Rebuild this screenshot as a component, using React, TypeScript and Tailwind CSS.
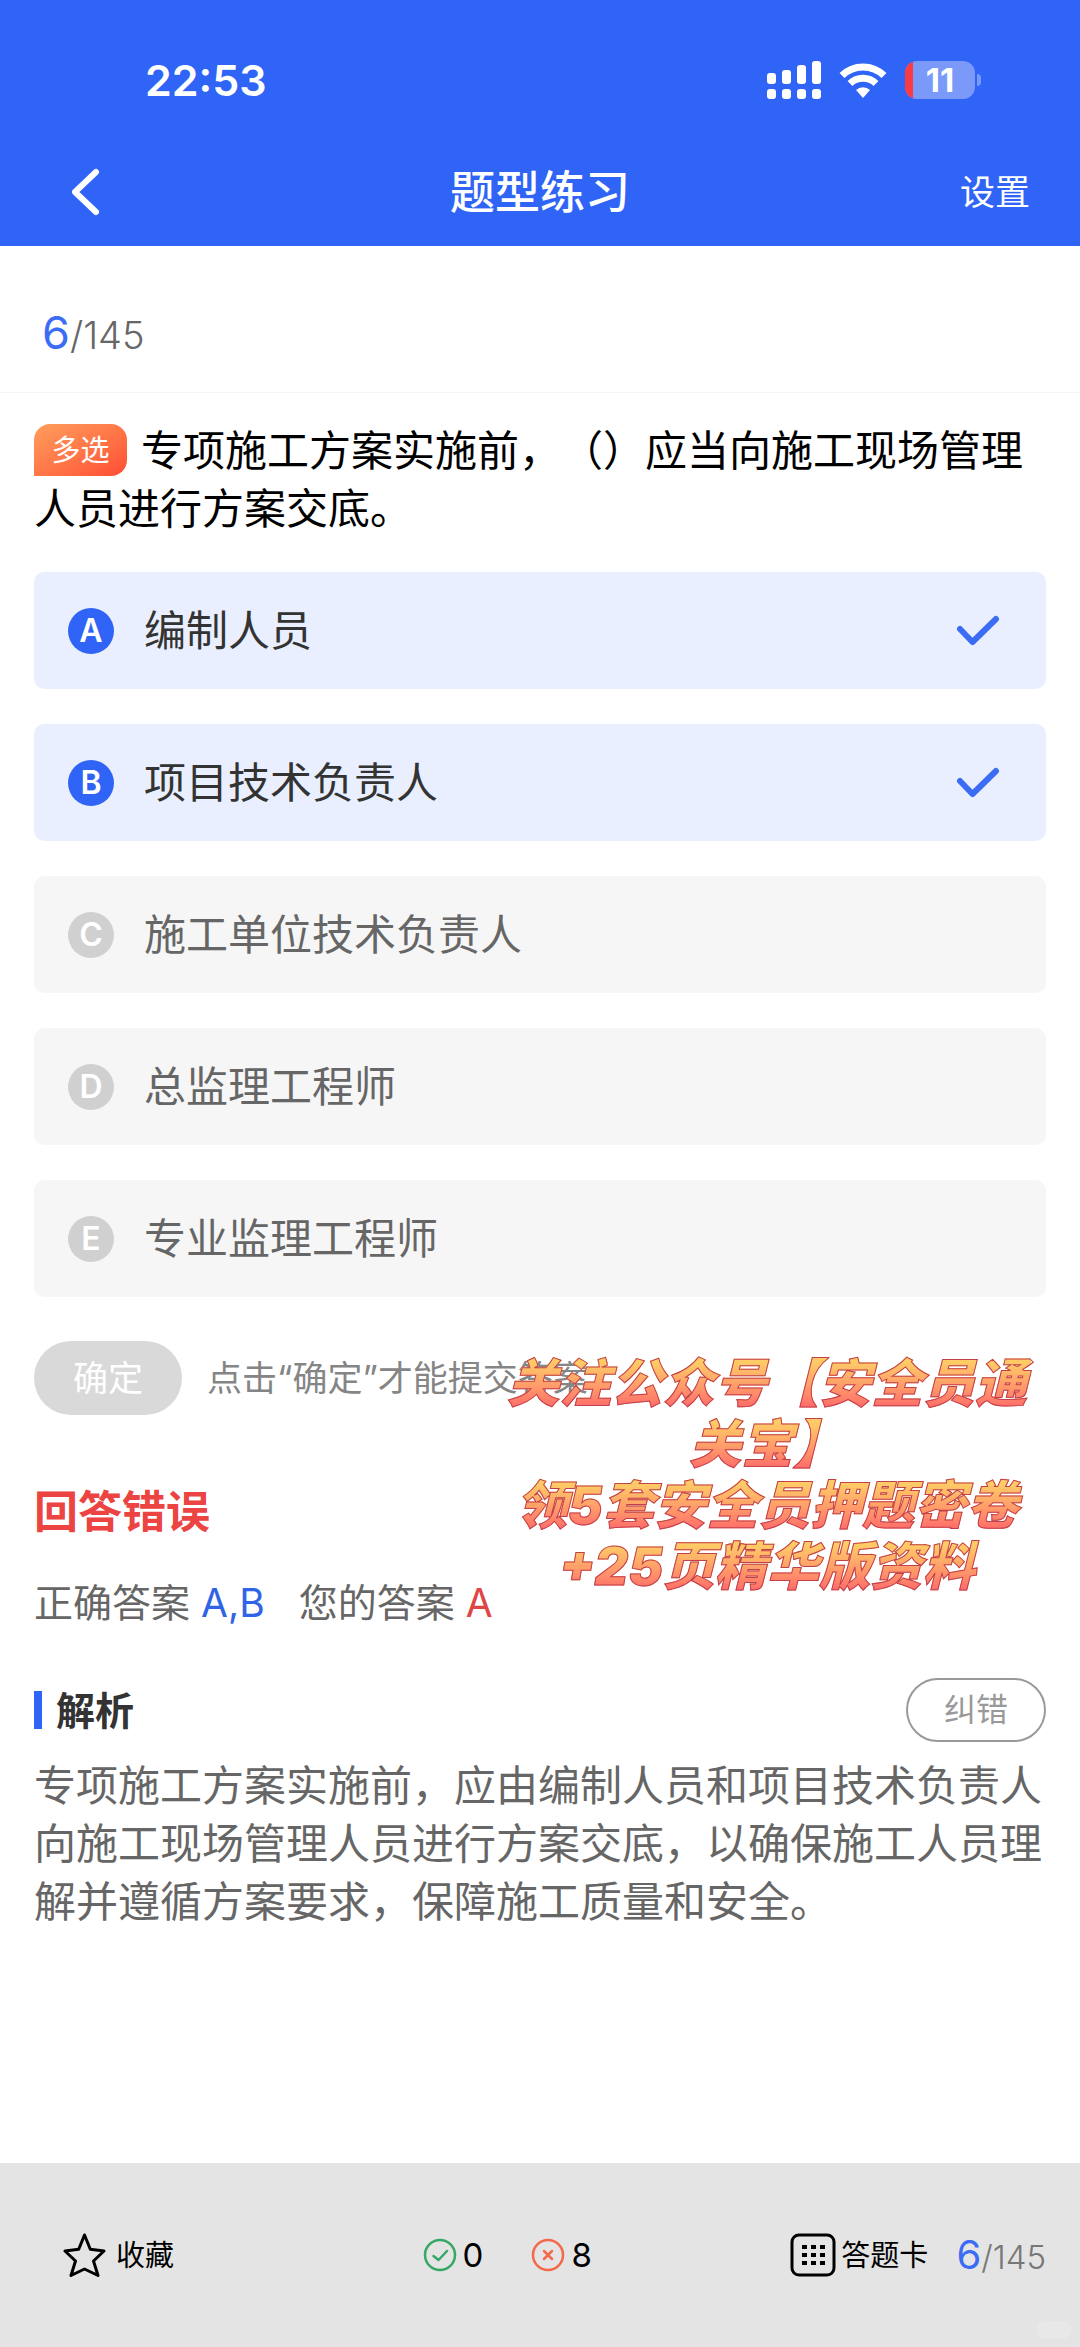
import { useState } from 'react';

type Option = { key: string; text: string; picked: boolean };

const initialOptions: Option[] = [
  { key: 'A', text: '编制人员', picked: true },
  { key: 'B', text: '项目技术负责人', picked: true },
  { key: 'C', text: '施工单位技术负责人', picked: false },
  { key: 'D', text: '总监理工程师', picked: false },
  { key: 'E', text: '专业监理工程师', picked: false },
];

const promoLines = ['关注公众号【安全员通', '关宝】', '领5套安全员押题密卷', '+25页精华版资料'];

function SignalIcon() {
  const heights = [11, 14, 19, 23];
  return (
    <svg width="54" height="38" viewBox="0 0 54 38" fill="#fff" aria-hidden="true">
      {heights.map((h, i) => (
        <g key={h}>
          <rect x={i * 15} y={23 - h} width="9" height={h} rx="3" />
          <rect x={i * 15} y="28" width="9" height="10" rx="3" />
        </g>
      ))}
    </svg>
  );
}

function WifiIcon() {
  return (
    <svg width="48" height="36" viewBox="0 0 48 36" fill="none" stroke="#fff" strokeWidth="7" aria-hidden="true">
      <path d="M3 13.5a30 30 0 0 1 42 0" />
      <path d="M11 21.5a19 19 0 0 1 26 0" />
      <path d="M24 36l-7-8a10.500 10.500 0 0 1 14 0z" fill="#fff" stroke="none" />
    </svg>
  );
}

function StatusBar() {
  return (
    <div className="flex h-[138px] items-center justify-between pt-[22px] pr-[99px] pl-[145px]">
      <span className="text-[43px] leading-none font-semibold">22:53</span>
      <div className="flex items-center">
        <SignalIcon />
        <span className="ml-[18px] flex">
          <WifiIcon />
        </span>
        <div className="ml-[18px] flex items-center gap-[2px]">
          <div className="flex h-[38px] w-[70px] items-center overflow-hidden rounded-[12px] bg-[#7a99f9]">
            <span className="h-full w-2 bg-[#fb3b44]" />
            <span className="flex-1 pr-2 text-center text-[33px] leading-none font-bold">11</span>
          </div>
          <span className="h-3 w-1 rounded-r-full bg-[#7a99f9]" />
        </div>
      </div>
    </div>
  );
}

function NavBar() {
  return (
    <div className="grid h-[108px] grid-cols-3 items-center pr-[50px] pl-[70px]">
      <button type="button" aria-label="返回" className="w-fit">
        <svg width="31" height="48" viewBox="0 0 31 48" fill="none" stroke="#fff" strokeWidth="6" strokeLinecap="round" strokeLinejoin="round">
          <path d="M26 4L5 24l21 20" />
        </svg>
      </button>
      <h1 className="-ml-5 text-center text-[45px] leading-none font-medium">题型练习</h1>
      <button type="button" className="justify-self-end text-[35px] leading-none">
        设置
      </button>
    </div>
  );
}

function OptionRow({ option, onToggle }: { option: Option; onToggle: () => void }) {
  return (
    <label
      className={`relative flex h-[117px] items-center rounded-[10px] pr-[46px] pl-[34px] text-[42px] leading-none ${
        option.picked ? 'bg-[#e9effe] text-[#333]' : 'bg-[#f6f6f6] text-[#666]'
      }`}
    >
      <input type="checkbox" className="sr-only" checked={option.picked} onChange={onToggle} />
      <span
        className={`mr-[30px] flex size-[46px] items-center justify-center rounded-full text-[32px] leading-none font-semibold text-white ${
          option.picked ? 'bg-[#3064f6]' : 'bg-[#d0d0d0]'
        }`}
      >
        {option.key}
      </span>
      <span className="flex-1">{option.text}</span>
      {option.picked && (
        <svg width="44" height="32" viewBox="0 0 44 32" fill="none" stroke="#3b6cf4" strokeWidth="6" strokeLinecap="round" strokeLinejoin="round" aria-hidden="true">
          <path d="M4 14l12.500 13L40 4" />
        </svg>
      )}
    </label>
  );
}

function Promo() {
  return (
    <p className="pointer-events-none absolute top-[12px] right-[15px] flex flex-col items-center text-[52px] leading-[61px] font-black italic [text-spacing-trim:space-all]">
      {promoLines.map((line) => (
        <span
          key={line}
          className="bg-linear-to-b from-[#ffcb66] from-15% to-[#ff6a6a] to-90% bg-clip-text px-1 whitespace-nowrap text-transparent [-webkit-text-stroke:1px_#c2404a]"
        >
          {line}
        </span>
      ))}
    </p>
  );
}

function Footer() {
  return (
    <footer className="relative mt-auto flex h-[184px] items-center justify-between bg-[#e4e4e4] pr-[34px] pl-[63px] text-black">
      <button type="button" className="flex items-center gap-[10px] text-[29px] leading-none">
        <svg width="43" height="44" viewBox="0 0 43 44" fill="none" stroke="#000" strokeWidth="3" strokeLinejoin="round" aria-hidden="true">
          <path d="M21.500 2l5.800 14.300L41 18 30.500 28l4.500 14.500-13.500-6.500L8 42.500 12.500 28 2 18l13.700-1.700z" />
        </svg>
        收藏
      </button>
      <div className="ml-[50px] flex items-center gap-[48px] text-[33px] leading-none">
        <span className="flex items-center gap-[6px]">
          <svg width="34" height="34" viewBox="0 0 34 34" fill="none" stroke="#35a866" strokeWidth="2.500" strokeLinecap="round" strokeLinejoin="round" aria-hidden="true">
            <circle cx="17" cy="17" r="15" />
            <path d="M10.500 18l5 4 8.500-9" />
          </svg>
          0
        </span>
        <span className="flex items-center gap-[6px]">
          <svg width="34" height="34" viewBox="0 0 34 34" fill="none" stroke="#f4694a" strokeWidth="2.500" strokeLinecap="round" aria-hidden="true">
            <circle cx="17" cy="17" r="15" />
            <path d="M13 13l8 8M21 13l-8 8" />
          </svg>
          8
        </span>
      </div>
      <div className="flex items-center gap-[28px]">
        <button type="button" className="flex items-center gap-[5px] text-[29px] leading-none">
          <svg width="46" height="44" viewBox="0 0 46 44" fill="none" aria-hidden="true">
            <rect x="2" y="2" width="42" height="40" rx="7" stroke="#000" strokeWidth="3" />
            {[12, 20, 28].map((y) =>
              [12, 21, 30].map((x) => <rect key={`${x}-${y}`} x={x} y={y} width="5" height="4" fill="#000" />),
            )}
          </svg>
          答题卡
        </button>
        <p className="flex items-baseline leading-none">
          <span className="text-[40px] text-[#3b6cf4]">6</span>
          <span className="text-[33px] font-light text-[#777]">/145</span>
        </p>
      </div>
      <span className="absolute right-2 bottom-2 h-[18px] w-9 rounded-full bg-[#e8e8e8]" />
    </footer>
  );
}

export default function App() {
  const [options, setOptions] = useState(initialOptions);
  const toggle = (key: string) =>
    setOptions((list) => list.map((o) => (o.key === key ? { ...o, picked: !o.picked } : o)));

  return (
    <div className="flex min-h-screen flex-col bg-white font-[Inter,'Noto_Sans_CJK_SC',sans-serif]" lang="zh-CN">
      <header className="bg-[#3064f6] text-white">
        <StatusBar />
        <NavBar />
      </header>

      <p className="flex h-[147px] items-center border-b border-[#f5f5f5] px-[42px] pt-[26px] leading-none">
        <span className="flex items-baseline">
          <span className="text-[45px] text-[#3b6cf4]">6</span>
          <span className="text-[38px] font-light text-[#666]">/145</span>
        </span>
      </p>

      <main className="px-[34px] pt-[29px]">
        <h2 className="text-[42px] leading-[58px] text-black [text-spacing-trim:space-all]">
          <span className="mt-[2px] mr-[14px] inline-flex h-[52px] w-[93px] items-center justify-center rounded-[16px] rounded-bl-none bg-linear-to-br from-[#ff9d5c] to-[#ff4a34] align-top text-[29px] leading-none text-white">
            多选
          </span>
          专项施工方案实施前，（）应当向施工现场管理人员进行方案交底。
        </h2>

        <div role="group" aria-label="选项" className="mt-[34px] flex flex-col gap-[35px]">
          {options.map((o) => (
            <OptionRow key={o.key} option={o} onToggle={() => toggle(o.key)} />
          ))}
        </div>

        <section className="relative mt-[44px]">
          <div className="flex items-center gap-[25px] text-[35px] leading-none">
            <button type="button" className="h-[74px] w-[148px] rounded-full bg-[#d9d9d9] text-white">
              确定
            </button>
            <span className="text-[#858585]">点击“确定”才能提交答案</span>
          </div>
          <h3 className="mt-[70px] text-[44px] leading-[54px] font-bold text-[#ec4343]">回答错误</h3>
          <p className="mt-[38px] flex gap-[34px] text-[39px] leading-[52px] text-[#666]">
            <span>
              正确答案 <span className="text-[#3064e6]">A,B</span>
            </span>
            <span>
              您的答案 <span className="text-[#e04444]">A</span>
            </span>
          </p>
          <Promo />
        </section>

        <section className="mt-[49px]">
          <div className="flex items-center justify-between">
            <h3 className="flex items-center gap-[14px] text-[39px] leading-none font-bold text-[#333]">
              <span className="h-[38px] w-2 bg-[#3064f6]" />
              解析
            </h3>
            <button type="button" className="h-[64px] w-[140px] rounded-full border-2 border-[#999] text-[32px] leading-none text-[#999]">
              纠错
            </button>
          </div>
          <p className="mt-[15px] text-[42px] leading-[58px] text-[#666] [text-spacing-trim:space-all]">
            专项施工方案实施前，应由编制人员和项目技术负责人向施工现场管理人员进行方案交底，以确保施工人员理解并遵循方案要求，保障施工质量和安全。
          </p>
        </section>
      </main>

      <Footer />
    </div>
  );
}
